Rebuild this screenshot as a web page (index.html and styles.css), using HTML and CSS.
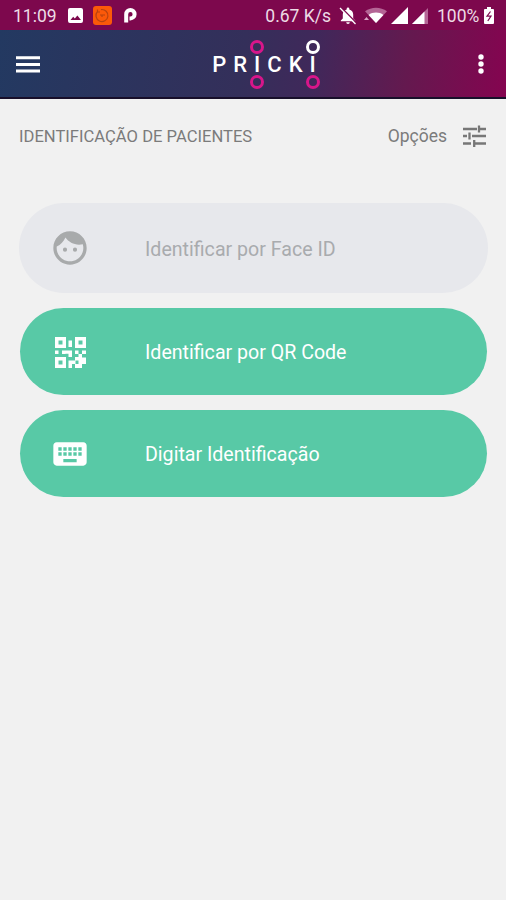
FILE: index.html
```html
<!DOCTYPE html>
<html lang="pt-BR">
<head>
    <meta charset="UTF-8">
    <meta name="viewport" content="width=device-width, initial-scale=1.0">
    <title>Pricki</title>
    <link rel="stylesheet" href="styles.css">
</head>
<body>
    <div class="status-bar">
        <span class="clock">11:09</span>
        <svg class="icon-image" width="15" height="15" viewBox="0 0 15 15">
            <path fill="#fff" fill-rule="evenodd" d="M2 0h11a2 2 0 0 1 2 2v11a2 2 0 0 1-2 2H2a2 2 0 0 1-2-2V2a2 2 0 0 1 2-2zM2.500 12h10.500L9.400 7.500 6.800 10.500 5.200 8.800z"/>
        </svg>
        <svg class="icon-app" width="19" height="19" viewBox="0 0 19 19">
            <rect width="19" height="19" rx="3" fill="#fb5909"/>
            <path d="M4.500 5.500A6 6 0 1 0 8 3.600M4.500 3.500v2.500H7M7 9h5M9 9v2" fill="none" stroke="#b8430f" stroke-width="1.200"/>
        </svg>
        <svg class="icon-p" width="13" height="15" viewBox="0 0 13 15">
            <path d="M2.200 14.500V6.200a4.200 4.200 0 1 1 4.200 4.200H5.500" fill="none" stroke="#fff" stroke-width="4"/>
        </svg>
        <span class="speed">0.67 K/s</span>
        <svg class="icon-bell" width="18" height="18" viewBox="0 0 18 18">
            <path fill="#fff" d="M9 .5c.8 0 1.300.6 1.300 1.300v.6c2.400.6 3.900 2.600 3.900 5.100v4l2 2v.8H1.800v-.8l2-2v-4c0-2.500 1.500-4.500 3.900-5.100v-.6C7.700 1.100 8.200.5 9 .5zM7.200 15.200h3.600a1.800 1.800 0 0 1-3.600 0z"/>
            <path d="M2.500.8L17.500 16" stroke="#7d084d" stroke-width="1.500"/>
            <path d="M1 1L16.500 17" stroke="#fff" stroke-width="1.300"/>
        </svg>
        <svg class="icon-wifi" width="23" height="17" viewBox="0 0 23 17">
            <path fill="#b46595" d="M12 16L1 4.200C7.300-.5 16.700-.5 23 4.200z"/>
            <path fill="#fff" d="M12 16L4.600 8c4.200-3.200 10.600-3.200 14.800 0z"/>
            <path fill="#d9a8c6" d="M0 13l2.500-3L5 13z"/>
        </svg>
        <svg class="icon-signal" width="17" height="17" viewBox="0 0 17 17">
            <path fill="#fff" d="M0 17L17 0v17z"/>
        </svg>
        <svg class="icon-signal" width="16" height="17" viewBox="0 0 16 17">
            <path fill="#b46595" d="M0 17L16 1v16z"/>
            <path fill="#fff" d="M0 17L12.500 4.500V17z"/>
        </svg>
        <span class="percent">100%</span>
        <svg class="icon-battery" width="10" height="17" viewBox="0 0 10 17">
            <path fill="#fff" d="M3 0h4v2h2a1 1 0 0 1 1 1v13a1 1 0 0 1-1 1H1a1 1 0 0 1-1-1V3a1 1 0 0 1 1-1h2z"/>
            <path d="M6.500 4.500L3 9.200h4L3.800 14" fill="none" stroke="#7d084d" stroke-width="1.200"/>
        </svg>
    </div>

    <header class="toolbar">
        <svg width="24" height="17" viewBox="0 0 24 17">
            <path d="M0 1.800h24M0 8.400h24M0 15h24" stroke="#fff" stroke-width="3"/>
        </svg>
        <div class="logo"><span>P</span><span>R</span><span class="pin">I</span><span>C</span><span>K</span><span class="pin pin-white">I</span></div>
        <svg width="6" height="20" viewBox="0 0 6 20" fill="#fff">
            <circle cx="3" cy="3" r="2.700"/>
            <circle cx="3" cy="10" r="2.700"/>
            <circle cx="3" cy="17" r="2.700"/>
        </svg>
    </header>

    <main>
        <div class="heading">
            <h1>IDENTIFICAÇÃO DE PACIENTES</h1>
            <div class="options">
                <span>Opções</span>
                <svg width="23" height="22" viewBox="0 0 23 22">
                    <path d="M0 4h14M17 4h6M16 .5v7M0 11h4M9 11h14M6.500 7.500v7M0 18.500h8M12 18.500h11M11.200 15v7" fill="none" stroke="#777" stroke-width="2.300"/>
                </svg>
            </div>
        </div>

        <div class="actions">
            <button class="action disabled" disabled>
                <svg width="40" height="40" viewBox="0 0 24 24">
                    <path fill="#a8aaab" d="M9 11.750a1.250 1.250 0 1 0 0 2.500 1.250 1.250 0 0 0 0-2.500zm6 0a1.250 1.250 0 1 0 0 2.500 1.250 1.250 0 0 0 0-2.500zM12 2C6.480 2 2 6.480 2 12s4.480 10 10 10 10-4.480 10-10S17.520 2 12 2zm0 18c-4.410 0-8-3.590-8-8 0-.29.02-.58.05-.86 2.360-1.050 4.230-2.980 5.210-5.370C11.070 8.330 14.050 10 17.420 10c.78 0 1.530-.09 2.250-.26.21.71.33 1.470.33 2.260 0 4.410-3.590 8-8 8z"/>
                </svg>
                <span>Identificar por Face ID</span>
            </button>
            <button class="action">
                <svg width="40" height="40" viewBox="0 0 40 40">
                    <path fill="#fff" fill-rule="evenodd" d="M5 5h11v11H5zM8.500 8.500v4h4v-4zM25 5h11v11H25zM28.500 8.500v4h4v-4zM5 25h11v11H5zM8.500 28.500v4h4v-4z"/>
                    <path fill="#fff" d="M18.500 8.500H22V15h-3.500zM5 18.500h3.500V22H5zM12 18.500h3.500V22H12zM15.500 18.500H22V25h-3.500v-3.200h-3zM25 18.500h3.500V22H25zM32 18.500h4V22h-4zM28.500 22H32v3.500h-3.500zM25 25h3.500v3.500h-3V32H22v4h-3.500v-7.500H25zM32 25.500h4V32h-4zM28.500 25.500H32V32h-3.500zM25 32h7v4h-7z"/>
                </svg>
                <span>Identificar por QR Code</span>
            </button>
            <button class="action">
                <svg width="40" height="40" viewBox="0 0 24 24">
                    <path fill="#fff" d="M20 5H4c-1.100 0-1.990.9-1.990 2L2 17c0 1.100.9 2 2 2h16c1.100 0 2-.9 2-2V7c0-1.100-.9-2-2-2zm-9 3h2v2h-2V8zm0 3h2v2h-2v-2zM8 8h2v2H8V8zm0 3h2v2H8v-2zm-1 2H5v-2h2v2zm0-3H5V8h2v2zm9 7H8v-2h8v2zm0-4h-2v-2h2v2zm0-3h-2V8h2v2zm3 3h-2v-2h2v2zm0-3h-2V8h2v2z"/>
                </svg>
                <span>Digitar Identificação</span>
            </button>
        </div>
    </main>
</body>
</html>
```
FILE: styles.css
```css
*,
*::before,
*::after {
    box-sizing: border-box;
}

body {
    margin: 0;
    min-height: 100vh;
    background-color: #f1f1f1;
    font-family: Roboto, "Liberation Sans", sans-serif;
}

svg {
    display: block;
    flex-shrink: 0;
}

.status-bar {
    display: flex;
    align-items: center;
    height: 30px;
    padding: 1px 12px 0 13px;
    background-color: #7d084d;
    color: #eddbe6;
    font-size: 17.5px;
    white-space: nowrap;
}

.clock {
    width: 55px;
}

.icon-app {
    margin-left: 10px;
}

.icon-p {
    margin-left: 12px;
}

.speed {
    margin-left: auto;
}

.icon-bell {
    margin-left: 8px;
}

.icon-wifi {
    margin-left: 7px;
}

.icon-signal {
    margin-left: 4px;
}

.percent {
    width: 42px;
    margin-left: 9px;
}

.icon-battery {
    margin-left: 5px;
}

/* toolbar */
.toolbar {
    display: flex;
    justify-content: space-between;
    align-items: center;
    height: 69px;
    padding: 1px 22px 0 16px;
    border-bottom: 2px solid #180f2a;
    background: linear-gradient(97deg, #233961 0%, #342f5a 48%, #40285a 62%, #64194f 80%, #850450 100%);
}

.logo {
    display: flex;
    padding: 2px 0 0 17px;
    color: #fff;
    font-size: 22px;
    font-weight: 500;
    letter-spacing: 7px;
    line-height: 26px;
}

.pin {
    position: relative;
}

.pin::before,
.pin::after {
    content: "";
    position: absolute;
    left: -4px;
    width: 14px;
    height: 14px;
    border: 3px solid #d8168a;
    border-radius: 50%;
}

.pin::before {
    top: -12px;
}

.pin::after {
    bottom: -11px;
}

.pin-white::before {
    border-color: #fff;
}

/* content */
.heading {
    display: flex;
    justify-content: space-between;
    align-items: center;
    height: 74px;
    padding: 0 20px 0 19px;
    color: #7b7b7b;
}

h1 {
    margin: 0;
    font-size: 16.6px;
    font-weight: 400;
}

.options {
    display: flex;
    align-items: center;
    gap: 16px;
    font-size: 17.5px;
}

.actions {
    display: flex;
    flex-direction: column;
    gap: 15px;
    padding: 30px 19px 0 20px;
}

.action {
    display: flex;
    align-items: center;
    height: 87px;
    padding: 0 30px;
    border: none;
    border-radius: 45px;
    background-color: #58c9a6;
    color: #fff;
    font-family: inherit;
    font-size: 19.6px;
}

.action span {
    margin: 2px 0 0 55px;
}

.action.disabled {
    height: 90px;
    margin: 0 -1px;
    padding-left: 31px;
    background-color: #e7e8ec;
    color: #a9abae;
}
```
